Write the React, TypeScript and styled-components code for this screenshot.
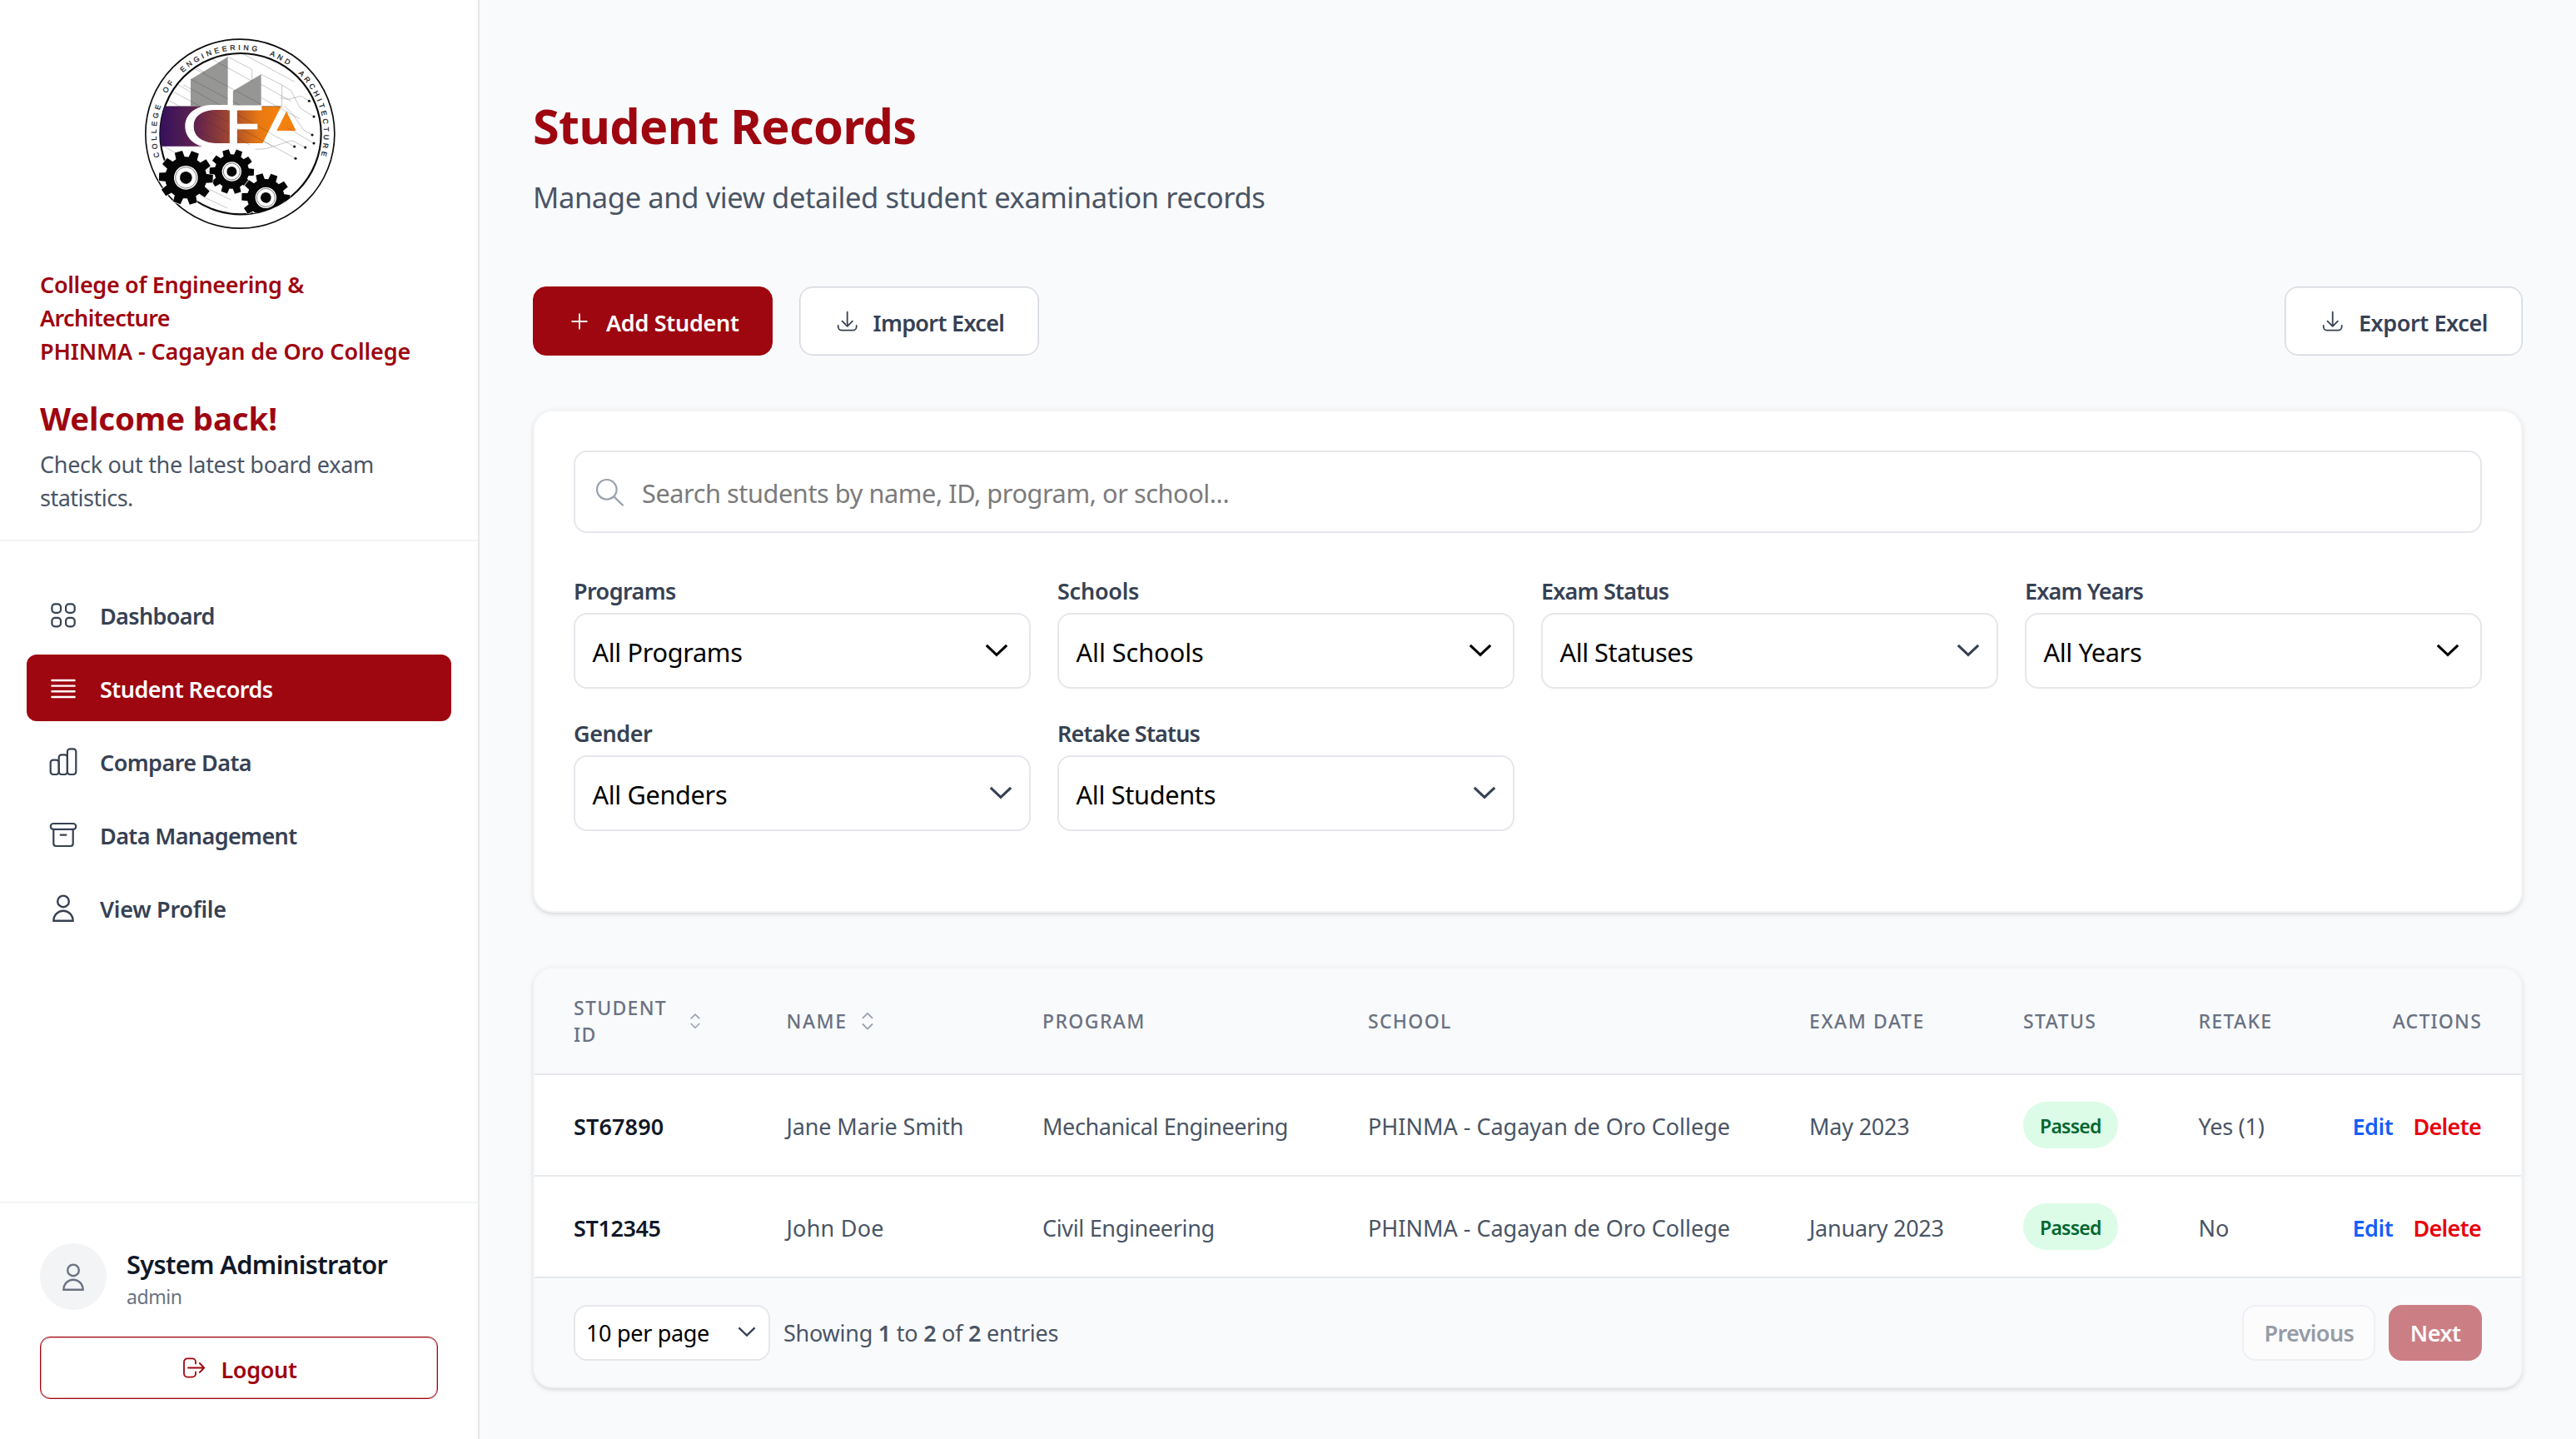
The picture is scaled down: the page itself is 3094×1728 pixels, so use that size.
import React from "react";
import styled, { createGlobalStyle } from "styled-components";

const red = "#9e0610";

const Global = createGlobalStyle`
  *, *::before, *::after { box-sizing: border-box; }
  body { margin: 0; background: #f9fafc; }
  body, button, table { font-family: "Noto Sans", "Open Sans", sans-serif; }
  h1, h2, p { margin: 0; }
  svg { display: block; flex: none; }
`;

const Shell = styled.div`
  display: flex;
  height: 1728px;
  overflow: hidden;
  background: #f9fafc;
`;

/* Text with its own tracking; the top padding settles the baseline in its line. */
const Txt = styled.span<{ $ls?: number }>`
  display: inline-block;
  padding-top: 4px;
  white-space: nowrap;
  letter-spacing: ${(p) => p.$ls ?? 0}px;
`;

/* ---------- sidebar ---------- */

const Sidebar = styled.aside`
  display: flex;
  flex-direction: column;
  flex: none;
  width: 576px;
  background: #fff;
  border-right: 2px solid #e5e7eb;
`;

const Brand = styled.header`
  padding: 30px 48px 32px;
  border-bottom: 2px solid #f3f4f6;
`;

const LogoSlot = styled.div`
  display: flex;
  justify-content: center;
  margin-bottom: 30px;
`;

const BrandLine = styled.div`
  height: 40px;
  font-size: 27px;
  line-height: 36px;
  font-weight: 600;
  color: ${red};
`;

const Welcome = styled.h2`
  height: 56px;
  margin-top: 32px;
  margin-bottom: 8px;
  font-size: 38.4px;
  line-height: 53px;
  font-weight: 700;
  color: ${red};
`;

const Hint = styled.p`
  height: 40px;
  font-size: 27px;
  line-height: 36px;
  color: #4a5565;
`;

const Nav = styled.nav`
  display: flex;
  flex: 1;
  flex-direction: column;
  gap: 8px;
  padding: 47.5px 32px;
`;

const NavItem = styled.div<{ $active?: boolean }>`
  display: flex;
  align-items: center;
  gap: 24px;
  height: 80px;
  padding: 0 24px;
  border-radius: 12px;
  font-size: 27px;
  line-height: 40px;
  font-weight: 600;
  color: ${(p) => (p.$active ? "#fff" : "#364153")};
  background: ${(p) => (p.$active ? red : "transparent")};
`;

const Account = styled.footer`
  padding: 48px;
  border-top: 2px solid #f3f4f6;
`;

const Person = styled.div`
  display: flex;
  gap: 24px;
  height: 80px;
`;

const Avatar = styled.div`
  display: flex;
  align-items: center;
  justify-content: center;
  width: 80px;
  height: 80px;
  border-radius: 50%;
  color: #6a7282;
  background: #f3f4f6;
`;

const PersonName = styled.div`
  height: 46px;
  font-size: 30.7px;
  line-height: 42px;
  font-weight: 600;
  color: #101828;
`;

const PersonRole = styled.div`
  height: 34px;
  font-size: 23px;
  line-height: 28px;
  color: #6a7282;
`;

const LogoutButton = styled.button`
  display: flex;
  align-items: center;
  justify-content: center;
  gap: 16px;
  width: 100%;
  height: 75px;
  margin-top: 32px;
  padding: 0 0 1px;
  border: 1px solid ${red};
  border-radius: 12px;
  box-shadow: inset 0 0 0 1px rgba(158, 6, 16, 0.35);
  font-size: 27px;
  font-weight: 600;
  color: ${red};
  background: #fff;
`;

/* ---------- main column ---------- */

const Main = styled.main`
  flex: 1;
  min-width: 0;
  padding: 112px 64px 0;
`;

const Title = styled.h1`
  height: 72px;
  font-size: 57.6px;
  line-height: 70px;
  font-weight: 700;
  color: ${red};
`;

const Subtitle = styled.p`
  height: 56px;
  margin: 23px 0 81px;
  font-size: 34.6px;
  line-height: 52px;
  color: #4a5565;
`;

const Toolbar = styled.div`
  display: flex;
  gap: 32px;
`;

const ToolButton = styled.button<{ $primary?: boolean; $end?: boolean }>`
  display: flex;
  align-items: center;
  gap: ${(p) => (p.$primary ? 16 : 15)}px;
  height: 83px;
  padding: 0 ${(p) => (p.$primary ? 39 : 41)}px;
  margin-left: ${(p) => (p.$end ? "auto" : 0)};
  border: 1px solid ${(p) => (p.$primary ? red : "#d1d5dc")};
  border-radius: 16px;
  box-shadow: inset 0 0 0 1px ${(p) => (p.$primary ? red : "rgba(209, 213, 220, 0.5)")};
  font-size: 27px;
  font-weight: 600;
  color: ${(p) => (p.$primary ? "#fff" : "#364153")};
  background: ${(p) => (p.$primary ? red : "#fff")};
`;

const Card = styled.section`
  border: 2px solid #f3f4f6;
  border-radius: 24px;
  background: #fff;
  box-shadow: 0 2px 6px rgba(0, 0, 0, 0.1), 0 2px 4px -2px rgba(0, 0, 0, 0.1);
`;

const FilterCard = styled(Card)`
  height: 604px;
  margin-top: 65px;
  padding: 47px;
`;

const SearchField = styled.div`
  display: flex;
  align-items: center;
  gap: 18px;
  height: 98.5px;
  padding: 0 22px;
  border: 2px solid #e5e7eb;
  border-radius: 16px;
  font-size: 30.7px;
  color: #7b7b7b;
`;

const FilterGrid = styled.div`
  display: grid;
  grid-template-columns: repeat(4, 1fr);
  gap: 32px;
  margin-top: 48px;
`;

const FilterLabel = styled.div`
  height: 40px;
  margin-bottom: 8.5px;
  font-size: 27px;
  line-height: 36px;
  font-weight: 600;
  color: #364153;
`;

const SelectBox = styled.div<{ $inset?: boolean }>`
  display: flex;
  align-items: center;
  justify-content: space-between;
  height: 90.5px;
  padding: 0 ${(p) => (p.$inset ? 25 : 20.5)}px 0 20.5px;
  border: 2px solid #e5e7eb;
  border-radius: 16px;
  font-size: 30.7px;
  color: #000;
  background: #fff;
`;

/* ---------- table ---------- */

const TableCard = styled(Card)`
  height: 506px;
  margin-top: 65px;
  overflow: hidden;
`;

const Table = styled.table`
  width: 100%;
  table-layout: fixed;
  border-collapse: separate;
  border-spacing: 0;
`;

const Col = styled.col<{ $w?: number }>`
  width: ${(p) => (p.$w ? `${p.$w}px` : "auto")};
`;

const Th = styled.th<{ $right?: boolean }>`
  height: 128px;
  padding: 0 ${(p) => (p.$right ? 47 : 0)}px 4px 47px;
  border-bottom: 2px solid #e5e7eb;
  font-size: 23px;
  line-height: 32px;
  font-weight: 500;
  text-align: ${(p) => (p.$right ? "right" : "left")};
  color: #6a7282;
  background: #f9fafc;
`;

const ThInner = styled.div<{ $gap: number }>`
  display: flex;
  align-items: center;
  gap: ${(p) => p.$gap}px;
  color: #6a7282;
  svg {
    margin-top: 4px;
    color: #99a1af;
  }
`;

const HeadWrap = styled.div`
  padding-top: 4px;
  letter-spacing: 1.3px;
`;

const Td = styled.td<{ $strong?: boolean; $last?: boolean; $right?: boolean }>`
  height: ${(p) => (p.$last ? 120 : 122)}px;
  padding: 0 ${(p) => (p.$right ? 48 : 0)}px 0 47px;
  border-bottom: ${(p) => (p.$last ? "none" : "2px solid #e9ebee")};
  font-size: 27px;
  line-height: 40px;
  font-weight: ${(p) => (p.$strong ? 600 : 400)};
  color: ${(p) => (p.$strong ? "#101828" : "#4a5565")};
`;

const Badge = styled.span`
  display: inline-flex;
  align-items: center;
  height: 56px;
  padding: 0 20px 2px;
  border-radius: 28px;
  font-size: 23px;
  font-weight: 600;
  color: #016630;
  background: #dcfce7;
  vertical-align: middle;
`;

const Actions = styled.div`
  display: flex;
  justify-content: flex-end;
  gap: 24px;
  font-weight: 600;
`;

const Action = styled(Txt)<{ $danger?: boolean }>`
  color: ${(p) => (p.$danger ? "#e7000b" : "#155dfc")};
`;

const TableFoot = styled.div`
  display: flex;
  align-items: center;
  gap: 16px;
  height: 132px;
  padding: 0 47px;
  border-top: 2px solid #e5e7eb;
  font-size: 27px;
  color: #4a5565;
  background: #f9fafc;
`;

const PageSize = styled.div`
  display: flex;
  align-items: center;
  justify-content: space-between;
  width: 236px;
  height: 67px;
  padding: 0 15px 3px 13px;
  border: 2px solid #e5e7eb;
  border-radius: 16px;
  color: #000;
  background: #fff;
  svg { margin-top: 2px; }
`;

const Summary = styled(Txt)`
  flex: 1;
  margin-bottom: 3px;
  b { font-weight: 600; }
`;

const PageButton = styled.button<{ $primary?: boolean }>`
  height: 67px;
  padding: 0 ${(p) => (p.$primary ? 23.5 : 24)}px 3px;
  border: 2px solid ${(p) => (p.$primary ? red : "#e5e7eb")};
  border-radius: 16px;
  font-size: 27px;
  font-weight: 600;
  color: ${(p) => (p.$primary ? "#fff" : "#364153")};
  background: ${(p) => (p.$primary ? red : "#fff")};
  opacity: 0.5;
`;

/* ---------- icons ---------- */

type IconProps = { size?: number; box?: number; stroke?: number; children: React.ReactNode };

const Icon = ({ size = 40, box = size, stroke = 2.2, children }: IconProps) => (
  <svg width={size} height={size} viewBox={`0 0 ${box} ${box}`} fill="none" stroke="currentColor"
    strokeWidth={stroke} strokeLinecap="round" strokeLinejoin="round">{children}</svg>
);

const GridIcon = () => (
  <Icon>
    <rect x="6.4" y="7.3" width="10.6" height="10.6" rx="3.8" />
    <rect x="23.1" y="7.3" width="10.6" height="10.6" rx="3.8" />
    <rect x="6.4" y="23.8" width="10.6" height="10.6" rx="3.8" />
    <rect x="23.1" y="23.8" width="10.6" height="10.6" rx="3.8" />
  </Icon>
);
const ListIcon = () => <Icon stroke={2.4}><path d="M6.4 11h27.2M6.4 17.6h27.2M6.4 24.3h27.2M6.4 31h27.2" /></Icon>;
const BarsIcon = () => (
  <Icon>
    <rect x="4.7" y="18.6" width="10" height="17.4" rx="3.2" />
    <rect x="14.7" y="12.3" width="10.2" height="23.7" rx="3.2" />
    <rect x="24.9" y="5.3" width="10.4" height="30.7" rx="3.2" />
  </Icon>
);
const ArchiveIcon = () => (
  <Icon>
    <rect x="4.8" y="7" width="30.4" height="6.9" rx="3.3" />
    <path d="M8.3 13.9v17.2a2.9 2.9 0 0 0 2.9 2.9h17.6a2.9 2.9 0 0 0 2.9-2.9V13.9M16.6 20.6h6.8" />
  </Icon>
);
const UserIcon = () => (
  <Icon stroke={2.4}>
    <circle cx="20" cy="12.4" r="6.8" />
    <path strokeLinejoin="miter" d="M8.4 35.8C8.4 28.8 13.6 23.7 20 23.7S31.6 28.8 31.6 35.8Z" />
  </Icon>
);
const LogoutIcon = () => (
  <Icon size={32} stroke={1.8}>
    <path d="M18 11.6V9.4a4 4 0 0 0-4-4H8a4 4 0 0 0-4 4v14.2a4 4 0 0 0 4 4h6a4 4 0 0 0 4-4v-2.2M9 16.5h19.2M22.8 11l5.4 5.5-5.4 5.5" />
  </Icon>
);
const PlusIcon = () => <Icon size={32} stroke={1.8}><path d="M16 7.2v17.6M7.2 16h17.6" /></Icon>;
const DownloadIcon = () => (
  <Icon size={32} stroke={1.8}>
    <path d="M15.700 4.6v17M9.500 15.6 15.700 21.800l6.200-6.200M4.700 20.8v1.4a4.400 4.400 0 0 0 4.400 4.400h13.200a4.400 4.400 0 0 0 4.400-4.400v-1.400" />
  </Icon>
);
const SearchIcon = () => (
  <svg width="40" height="40" viewBox="0 0 40 40" fill="none" stroke="#99a1af" strokeWidth="2.2" strokeLinecap="round">
    <circle cx="15.8" cy="17.8" r="11.8" /><path d="M24.4 26.4 35 36.6" />
  </svg>
);
const SortIcon = ({ size = 28 }: { size?: number }) => (
  <Icon size={size} box={28} stroke={1.8}><path d="M8.4 10.4 14 4.8l5.6 5.6M8.4 18 14 23.6l5.6-5.6" /></Icon>
);
const Chevron = ({ color = "#364153", small }: { color?: string; small?: boolean }) => (
  <svg width={small ? 22 : 28} height={small ? 12.6 : 16} viewBox="0 0 28 16" fill="none" stroke={color} strokeWidth={small ? 3 : 3.1}>
    <path d="M1.8 1.8 14 13.4 26.2 1.8" />
  </svg>
);

/* ---------- college seal ---------- */

const Gear = ({ x, y, body, tip, ring, core }: { x: number; y: number; body: number; tip: number; ring: number; core: number }) => (
  <g transform={`translate(${x} ${y}) rotate(-16)`}>
    <circle r={body} fill="none" stroke="#fff" strokeWidth="9" />
    {Array.from({ length: 10 }, (_, i) => (
      <path key={i} transform={`rotate(${i * 36})`} stroke="#fff" strokeWidth="4" paintOrder="stroke"
        d={`M${-tip * 0.17} ${-body + 6}L${-tip * 0.145} ${-tip}H${tip * 0.145}L${tip * 0.17} ${-body + 6}Z`} fill="#050505" />
    ))}
    <circle r={body} fill="#050505" />
    <circle r={ring} fill="#fff" />
    <circle r={ring - 5} fill="none" stroke="#222" strokeWidth="1.6" />
    <circle r={core} fill="#050505" />
  </g>
);

const dots = [[634, 274], [651, 330], [645, 396], [651, 426], [620, 441], [581, 438], [585, 481]];

const Seal = () => (
  <svg width="260" height="260" viewBox="-9 0 780 780">
    <defs>
      <linearGradient id="band" x1="97" x2="533" y1="0" y2="0" gradientUnits="userSpaceOnUse">
        <stop offset="0" stopColor="#35115f" />
        <stop offset=".3" stopColor="#62234f" />
        <stop offset=".58" stopColor="#a3482f" />
        <stop offset=".82" stopColor="#e87913" />
        <stop offset="1" stopColor="#f6820c" />
      </linearGradient>
      <clipPath id="disc"><circle cx="387" cy="392" r="290" /></clipPath>
      <path id="rim" d="M94.7 475A302 302 0 1 1 675.3 475" />
    </defs>
    <circle cx="385" cy="392" r="340.5" fill="#fff" stroke="#0c0c0c" strokeWidth="5" />
    <circle cx="387" cy="392" r="290" fill="#fff" stroke="#0c0c0c" strokeWidth="6.5" />
    <g clipPath="url(#disc)">
      <path d="M207 196 341 115V292H207ZM359 238 461 178V292H359Z" fill="#979795" />
      <path d="M90 293H533L466 426H290V437H90Z" fill="url(#band)" />
      <path d="M517 381 552 311 587 381Z" fill="#f4810f" />
      <g fill="none" stroke="#303030" strokeWidth="1.3" opacity=".62">
        <path d="M270 115 342 155 430 203M207 150 461 286M207 195 390 292M180 215 500 392M135 235 500 436M110 262 420 432M120 190 207 242M200 140 260 172" />
        <path d="M100 308 340 438M100 345 270 438M100 385 200 438M341 115 428 160V200M390 101 580 204M461 178 536 216V298M461 214 570 275M461 262 600 338" />
        <path d="M536 216 568 236 602 300 651 330M530 262 556 268 606 256 634 274M545 292 572 318 616 380 645 396M440 448 478 446 572 416 620 441M555 370 651 426M500 394 581 438M470 418 585 481M190 590 340 660M250 580 352 630M110 437 330 560" />
      </g>
      <path d="M97 293H533" stroke="#333" strokeWidth="1.4" />
    </g>
    <path fill="#fff" d="M352 288H280C224 291 187 322 187 365S225 443 290 443H362V426H295C248 422 218 402 218 365S245 311 290 306H352Z" />
    <g fill="none" stroke="#fff">
      <path d="M350 232V296" strokeWidth="17" />
      <path d="M361 290V442" strokeWidth="27" />
      <path d="M340 298.500H463" strokeWidth="18" />
      <path d="M372 366H448" strokeWidth="20" />
    </g>
    {dots.map(([x, y]) => <circle key={`${x}-${y}`} cx={x} cy={y} r="4.6" fill="#111" />)}
    <Gear x={355} y={528} body={62} tip={80} ring={35} core={18} />
    <Gear x={190} y={550} body={75} tip={97} ring={43} core={22} />
    <g clipPath="url(#disc)"><Gear x={478} y={622} body={67} tip={87} ring={38} core={19} /></g>
    <text fontFamily="Liberation Sans, sans-serif" fontSize="26" stroke="#1a1a1a" strokeWidth=".8" fill="#1a1a1a" wordSpacing="20">
      <textPath href="#rim" textLength="1112" lengthAdjust="spacing">COLLEGE OF ENGINEERING AND ARCHITECTURE</textPath>
    </text>
  </svg>
);

/* ---------- data ---------- */

type Label = [string, number];

const navItems: { label: Label; icon: React.ReactNode; active?: boolean }[] = [
  { label: ["Dashboard", -0.65], icon: <GridIcon /> },
  { label: ["Student Records", -0.54], icon: <ListIcon />, active: true },
  { label: ["Compare Data", -0.56], icon: <BarsIcon /> },
  { label: ["Data Management", -0.62], icon: <ArchiveIcon /> },
  { label: ["View Profile", -0.26], icon: <UserIcon /> },
];

const filters: { label: Label; value: Label; multi?: boolean }[] = [
  { label: ["Programs", -0.6], value: ["All Programs", -0.34], multi: true },
  { label: ["Schools", -0.25], value: ["All Schools", -0.05], multi: true },
  { label: ["Exam Status", -0.8], value: ["All Statuses", -0.45] },
  { label: ["Exam Years", -0.85], value: ["All Years", -0.38], multi: true },
  { label: ["Gender", -0.45], value: ["All Genders", -0.35] },
  { label: ["Retake Status", -0.82], value: ["All Students", -0.31] },
];

const rows: { id: Label; name: Label; program: Label; date: Label; retake: Label }[] = [
  { id: ["ST67890", 0.12], name: ["Jane Marie Smith", -0.13], program: ["Mechanical Engineering", -0.42], date: ["May 2023", -0.2], retake: ["Yes (1)", -0.25] },
  { id: ["ST12345", -0.4], name: ["John Doe", 0.22], program: ["Civil Engineering", -0.34], date: ["January 2023", -0.25], retake: ["No", 0] },
];

const L = ({ t }: { t: Label }) => <Txt $ls={t[1]}>{t[0]}</Txt>;

export default function App() {
  return (
    <>
      <Global />
      <Shell>
        <Sidebar>
          <Brand>
            <LogoSlot><Seal /></LogoSlot>
            <BrandLine><Txt $ls={-0.32}>College of Engineering &amp;</Txt></BrandLine>
            <BrandLine><Txt $ls={-0.6}>Architecture</Txt></BrandLine>
            <BrandLine><Txt $ls={-0.1}>PHINMA - Cagayan de Oro College</Txt></BrandLine>
            <Welcome><Txt $ls={-0.13}>Welcome back!</Txt></Welcome>
            <Hint><Txt $ls={-0.3}>Check out the latest board exam</Txt></Hint>
            <Hint><Txt $ls={-0.5}>statistics.</Txt></Hint>
          </Brand>
          <Nav>
            {navItems.map((n) => (
              <NavItem key={n.label[0]} $active={n.active}>{n.icon}<L t={n.label} /></NavItem>
            ))}
          </Nav>
          <Account>
            <Person>
              <Avatar><UserIcon /></Avatar>
              <div>
                <PersonName><Txt $ls={-0.63}>System Administrator</Txt></PersonName>
                <PersonRole><Txt $ls={-0.42}>admin</Txt></PersonRole>
              </div>
            </Person>
            <LogoutButton><LogoutIcon /><Txt $ls={-0.35}>Logout</Txt></LogoutButton>
          </Account>
        </Sidebar>

        <Main>
          <Title><Txt $ls={-0.65}>Student Records</Txt></Title>
          <Subtitle><Txt $ls={-0.42}>Manage and view detailed student examination records</Txt></Subtitle>
          <Toolbar>
            <ToolButton $primary><PlusIcon /><Txt $ls={-0.3}>Add Student</Txt></ToolButton>
            <ToolButton><DownloadIcon /><Txt $ls={-0.68}>Import Excel</Txt></ToolButton>
            <ToolButton $end><DownloadIcon /><Txt $ls={-0.42}>Export Excel</Txt></ToolButton>
          </Toolbar>

          <FilterCard>
            <SearchField>
              <SearchIcon />
              <Txt $ls={-0.43}>Search students by name, ID, program, or school...</Txt>
            </SearchField>
            <FilterGrid>
              {filters.map((f) => (
                <div key={f.label[0]}>
                  <FilterLabel><L t={f.label} /></FilterLabel>
                  <SelectBox $inset={f.multi}>
                    <L t={f.value} />
                    <Chevron color={f.multi ? "#000" : undefined} />
                  </SelectBox>
                </div>
              ))}
            </FilterGrid>
          </FilterCard>

          <TableCard>
            <Table>
              <colgroup>
                <Col $w={255.5} /><Col $w={307.5} /><Col $w={391} /><Col $w={530} />
                <Col $w={257} /><Col $w={210.5} /><Col />
              </colgroup>
              <thead>
                <tr>
                  <Th><ThInner $gap={22}><HeadWrap>STUDENT<br />ID</HeadWrap><SortIcon size={24} /></ThInner></Th>
                  <Th><ThInner $gap={10}><Txt $ls={1.6}>NAME</Txt><SortIcon /></ThInner></Th>
                  <Th><Txt $ls={1.4}>PROGRAM</Txt></Th>
                  <Th><Txt $ls={1.3}>SCHOOL</Txt></Th>
                  <Th><Txt $ls={1.6}>EXAM DATE</Txt></Th>
                  <Th><Txt $ls={1.4}>STATUS</Txt></Th>
                  <Th><Txt $ls={1.3}>RETAKE</Txt></Th>
                  <Th $right><Txt $ls={1.2}>ACTIONS</Txt></Th>
                </tr>
              </thead>
              <tbody>
                {rows.map((r, i) => {
                  const last = i === rows.length - 1;
                  return (
                    <tr key={r.id[0]}>
                      <Td $strong $last={last}><L t={r.id} /></Td>
                      <Td $last={last}><L t={r.name} /></Td>
                      <Td $last={last}><L t={r.program} /></Td>
                      <Td $last={last}><Txt $ls={-0.01}>PHINMA - Cagayan de Oro College</Txt></Td>
                      <Td $last={last}><L t={r.date} /></Td>
                      <Td $last={last}><Badge><Txt $ls={-0.77}>Passed</Txt></Badge></Td>
                      <Td $last={last}><L t={r.retake} /></Td>
                      <Td $last={last} $right>
                        <Actions><Action $ls={-0.4}>Edit</Action><Action $danger $ls={-0.7}>Delete</Action></Actions>
                      </Td>
                    </tr>
                  );
                })}
              </tbody>
            </Table>
            <TableFoot>
              <PageSize><Txt $ls={-0.32}>10 per page</Txt><Chevron small /></PageSize>
              <Summary $ls={-0.25}>Showing <b>1</b> to <b>2</b> of <b>2</b> entries</Summary>
              <PageButton><Txt $ls={-0.6}>Previous</Txt></PageButton>
              <PageButton $primary><Txt $ls={-0.5}>Next</Txt></PageButton>
            </TableFoot>
          </TableCard>
        </Main>
      </Shell>
    </>
  );
}
